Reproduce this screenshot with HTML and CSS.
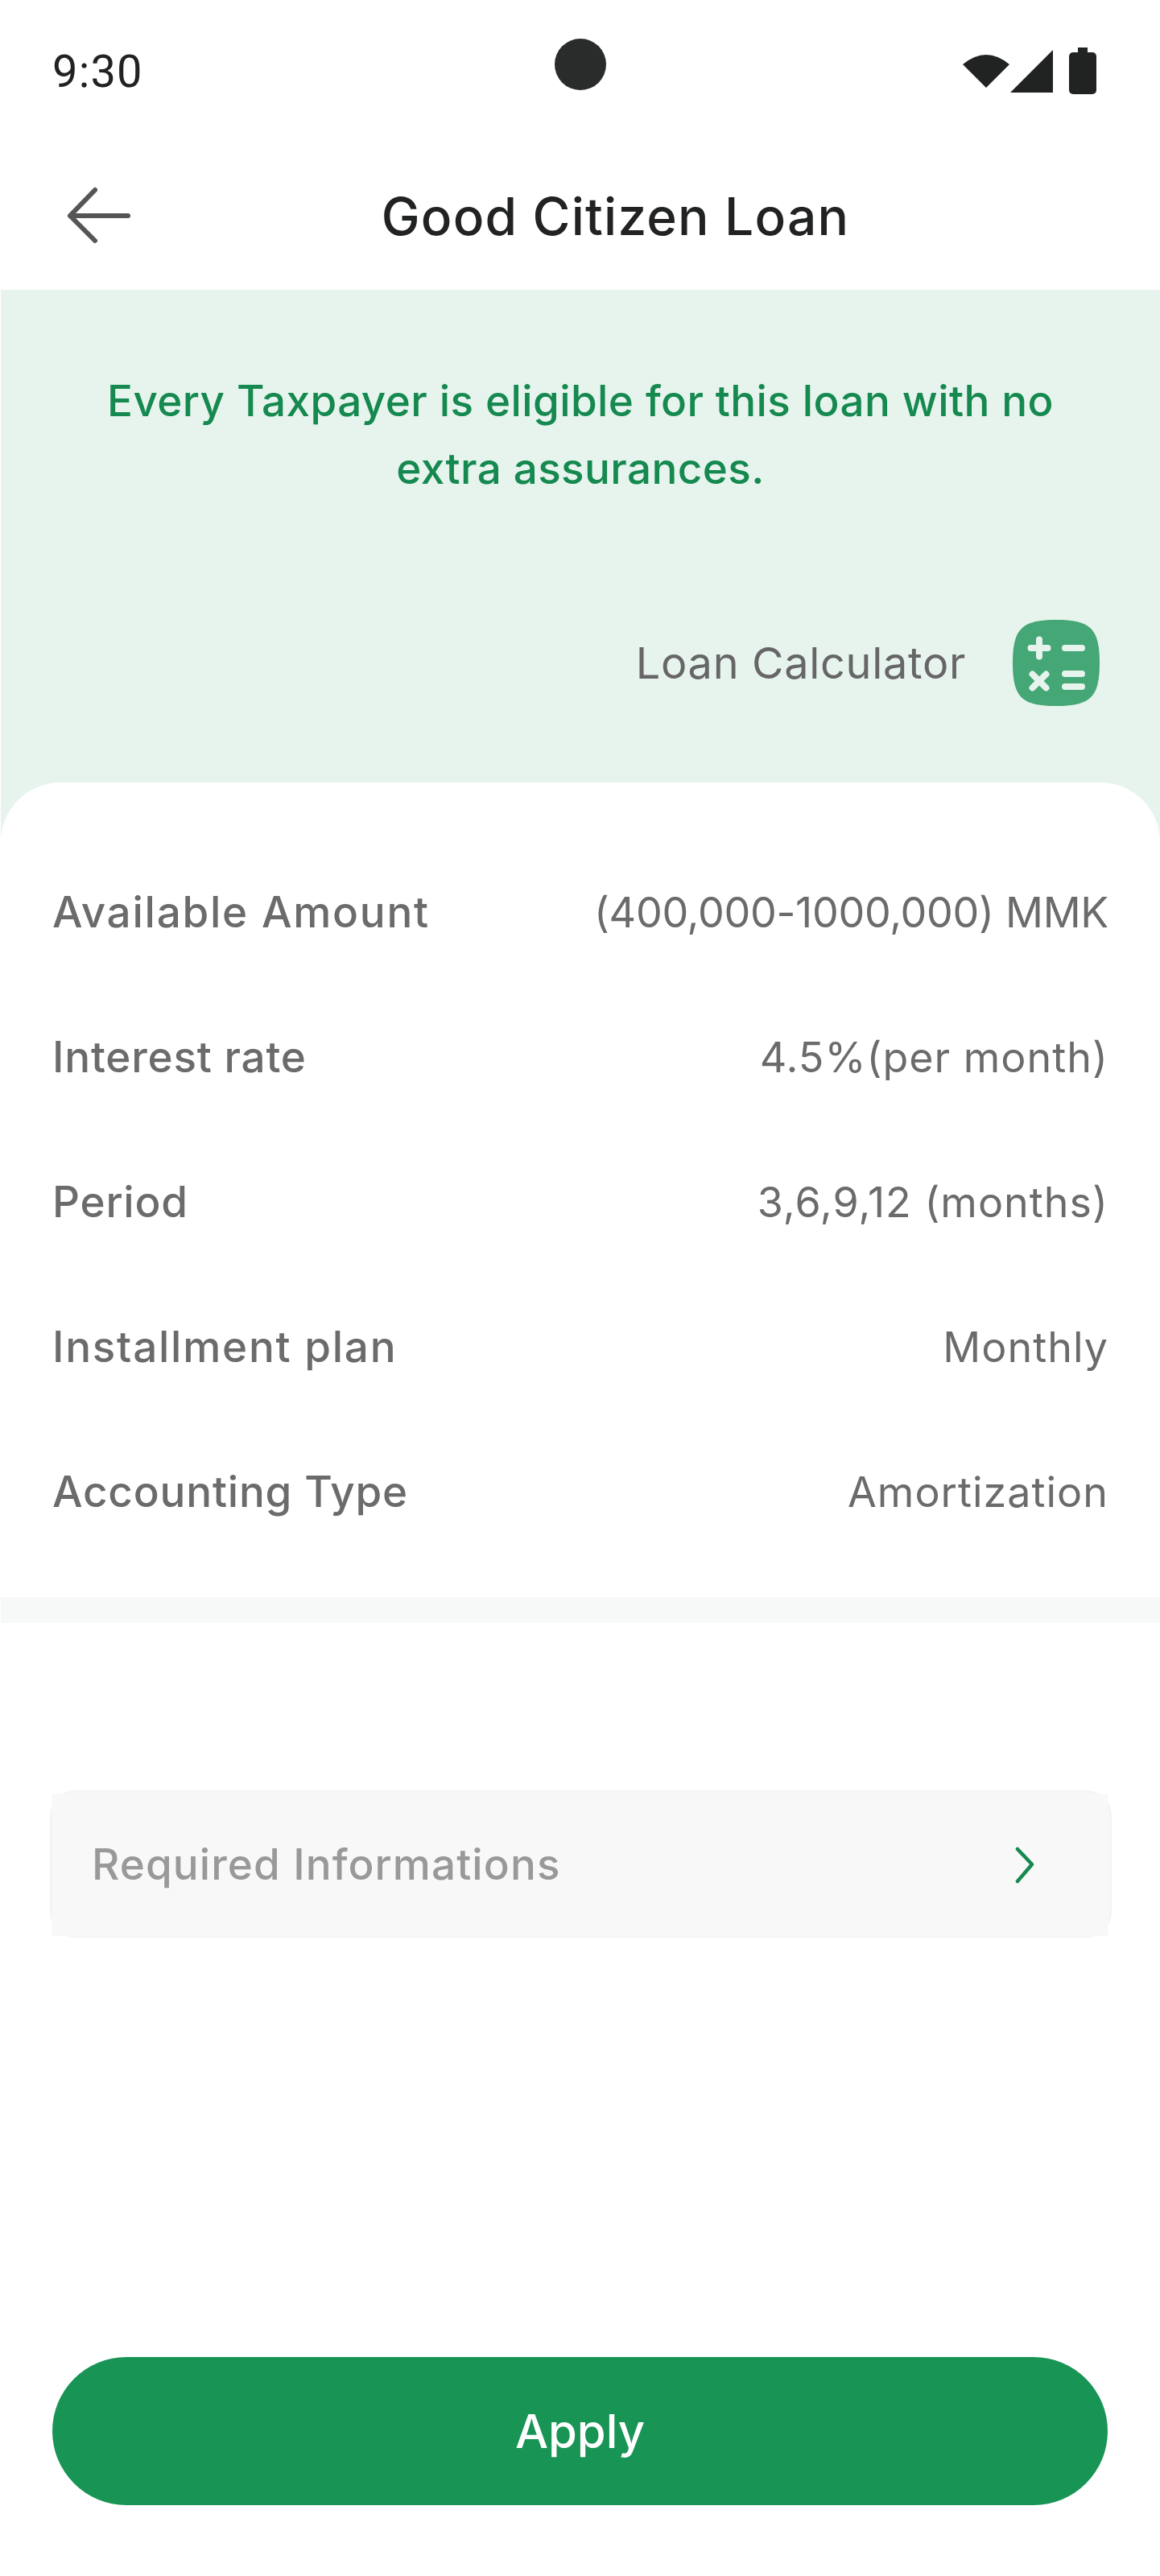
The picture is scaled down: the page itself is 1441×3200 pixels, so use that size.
FILE: index.html
```html
<!DOCTYPE html>
<html lang="en">
<head>
<meta charset="utf-8">
<title>Good Citizen Loan</title>
<link rel="stylesheet" href="styles.css">
</head>
<body>
<div class="screen">
  <div class="status">
    <span class="time">9:30</span>
    <span class="camera"></span>
    <svg class="status-icons" width="166" height="58" viewBox="0 0 166 58"><path d="M0 21 Q29 -3 58 21 L29 50 Z" fill="#212322"/><path d="M59 56 L112 3 V56 Z" fill="#212322"/><rect x="132" y="6" width="34" height="52" rx="5" fill="#212322"/><rect x="143" y="0" width="12" height="8" fill="#212322"/></svg>
  </div>
  <header class="appbar">
    <svg class="back" width="84" height="76" viewBox="0 0 84 76"><path d="M38 6 L7 38 L38 69 M7 38 H79" fill="none" stroke="#555" stroke-width="6" stroke-linecap="round" stroke-linejoin="round"/></svg>
    <h1 class="title">Good Citizen Loan</h1>
  </header>
  <section class="hero">
    <p class="hero-text">Every Taxpayer is eligible for this loan with no<br>extra assurances.</p>
    <div class="calc">
      <span class="calc-label">Loan Calculator</span>
      <svg class="calc-icon" width="108" height="107" viewBox="0 0 108 107"><path d="M54 0 C96 0 108 10 108 53.5 C108 97 96 107 54 107 C12 107 0 97 0 53.5 C0 10 12 0 54 0 Z" fill="#45a776"/><path d="M22.500 35 H43.500 M33 24.500 V45.500 M65 35 H86 M65 67 H86 M65 83 H86 M24.500 67.500 L41.500 84.500 M41.500 67.500 L24.500 84.500" fill="none" stroke="#e7f4ee" stroke-width="8" stroke-linecap="round"/></svg>
    </div>
  </section>
  <section class="sheet">
    <div class="row"><span class="k k-wide">Available Amount</span><span class="v v-tight">(400,000-1000,000) MMK</span></div>
    <div class="row"><span class="k">Interest rate</span><span class="v">4.5%(per month)</span></div>
    <div class="row"><span class="k">Period</span><span class="v">3,6,9,12 (months)</span></div>
    <div class="row"><span class="k k-wide">Installment plan</span><span class="v">Monthly</span></div>
    <div class="row"><span class="k">Accounting Type</span><span class="v">Amortization</span></div>
  </section>
  <div class="divider"></div>
  <div class="req">
    <div class="req-inner">
      <span class="req-label">Required Informations</span>
      <svg class="chev" width="24" height="46" viewBox="0 0 24 46"><path d="M3 3 L21 22 L3 43" fill="none" stroke="#15894f" stroke-width="4.500" stroke-linecap="round" stroke-linejoin="round"/></svg>
    </div>
  </div>
  <button class="apply">Apply</button>
</div>
</body>
</html>
```
FILE: styles.css
```css
* { box-sizing: border-box; }
html, body { margin: 0; padding: 0; background: #fff; }
body { font-family: "Inter", "Liberation Sans", sans-serif; }
.screen { width: 1441px; height: 3200px; display: flex; flex-direction: column; background: #fff; overflow: hidden; }
.status { height: 180px; flex: none; position: relative; display: flex; justify-content: space-between; align-items: flex-start; padding: 56px 79px 0 65px; }
.time { font-size: 56px; line-height: 66px; letter-spacing: 1.2px; color: #212322; font-family: "Roboto", sans-serif; }
.camera { position: absolute; left: 689px; top: 48px; width: 64px; height: 64px; border-radius: 50%; background: #2a2b2b; }
.status-icons { margin-top: 3px; }
.appbar { height: 180px; flex: none; position: relative; display: flex; align-items: center; justify-content: center; padding: 0 0 4px 88px; }
.back { position: absolute; left: 80px; top: 50px; }
.title { margin: 0; font-size: 64px; font-weight: 500; color: #212322; letter-spacing: 1.2px; }
.hero { height: 686px; flex: none; margin-left: 1px; background: #e7f4ee; padding-top: 96px; display: flex; flex-direction: column; }
.hero-text { margin: 0; text-align: center; font-size: 53px; line-height: 84px; font-weight: 500; letter-spacing: 0.4px; color: #15894f; }
.calc { display: flex; justify-content: flex-end; align-items: center; gap: 58px; padding-right: 75px; margin-top: 146px; }
.calc-label { font-size: 54px; letter-spacing: 0.7px; color: #666; }
.sheet { height: 1012px; flex: none; margin: -74px 0 0 1px; background: #fff; border-radius: 74px 74px 0 0; padding: 71px 65px 0 64px; display: flex; flex-direction: column; }
.row { height: 180px; flex: none; display: flex; justify-content: space-between; align-items: center; color: #6b6b6b; }
.k { font-size: 53px; font-weight: 500; letter-spacing: 0.8px; }
.k-wide { letter-spacing: 1.75px; }
.v { font-size: 52px; font-weight: 400; letter-spacing: 1px; margin-right: -1px; }
.v-tight { letter-spacing: -0.3px; }
.divider { height: 32px; flex: none; margin-left: 1px; background: #f7f8f8; }
.req { flex: none; margin: 208px 60px 0 62px; height: 183px; background: #f8f8f8; border: 3px solid #f1f6f4; border-radius: 32px; }
.req-inner { height: 100%; margin: 1px 2px 1px 0; background: #f8f8f8; display: flex; align-items: center; justify-content: space-between; padding: 0 91px 2px 49px; }
.req-label { font-size: 53px; font-weight: 500; letter-spacing: 1.1px; color: #999; }
.chev { margin-top: 2px; }
.apply { flex: none; margin: 521px 65px 0; height: 184px; border: 0; border-radius: 92px; background: #189455; color: #fff; font-family: inherit; font-size: 58px; font-weight: 500; }
```
